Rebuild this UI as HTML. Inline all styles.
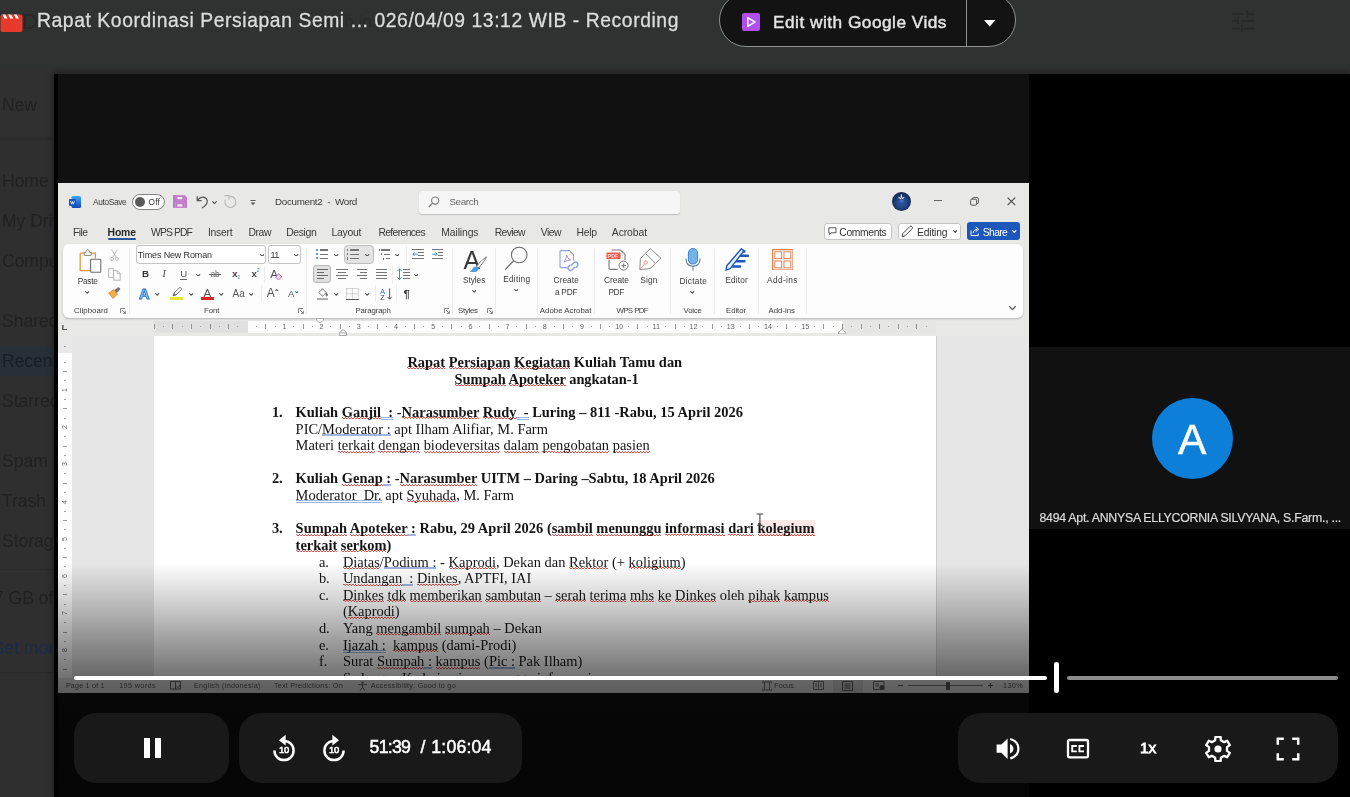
<!DOCTYPE html>
<html lang="id">
<head>
<meta charset="utf-8">
<title>Rapat Koordinasi Persiapan Semi ... Recording</title>
<style>
*{box-sizing:border-box;margin:0;padding:0}
html,body{width:1350px;height:797px;overflow:hidden;background:#303231;font-family:"Liberation Sans",sans-serif}
#root{position:absolute;left:0;top:0;width:1350px;height:797px;overflow:hidden;background:#303231;will-change:transform}
#root div,#root svg{position:absolute}
.t{white-space:pre}
.side{color:#212121}
.r{background-image:repeating-linear-gradient(90deg,rgba(222,60,50,.9) 0 1.5px,transparent 1.5px 3px),repeating-linear-gradient(90deg,transparent 0 1.5px,rgba(222,60,50,.9) 1.5px 3px);background-size:100% 1px,100% 1px;background-position:0 calc(100% - 1.6px),0 calc(100% - 0.6px);background-repeat:no-repeat}
.b{background-image:linear-gradient(#6f93d3,#6f93d3),linear-gradient(#6f93d3,#6f93d3);background-size:100% 0.7px,100% 0.7px;background-position:0 calc(100% - 2px),0 calc(100% - 0.5px);background-repeat:no-repeat}
.u{border-bottom:1px solid #111}
.pill{background:#1e1e1e;border-radius:22px}
.sep{width:1px;background:#d8d8d8}
</style>
</head>
<body>
<div id="root">
<div style="left:0px;top:68px;width:1350px;height:729px;background:#2f2f2f"></div>
<div class="t" style="left:22.0px;top:8.38px;font-size:22px;line-height:28px;color:#262727;">Drive</div>
<svg style="left:257px;top:8px" width="24" height="24" viewBox="0 0 24 24" fill="none" stroke="#272828" stroke-width="2"><circle cx="10" cy="10" r="6.5"/><path d="M15 15 L21 21"/></svg>
<div class="t" style="left:300.0px;top:10.61px;font-size:17px;line-height:21px;color:#292a29;">Search in Drive</div>
<div style="left:0px;top:68px;width:54px;height:72px;background:linear-gradient(to bottom,#303030 0,#303030 94%,#2a2a2a 100%)"></div>
<div style="left:0px;top:346px;width:54px;height:30px;background:#292f36"></div>
<div style="left:0px;top:569px;width:54px;height:1px;background:#2a2a2a"></div>
<div style="left:0px;top:672px;width:54px;height:1px;background:#2a2a2a"></div>
<div class="t" style="left:2.0px;top:93.94px;font-size:17.5px;line-height:22px;color:#212121;">New</div>
<div class="t" style="left:2.0px;top:169.94px;font-size:17.5px;line-height:22px;color:#212121;">Home</div>
<div class="t" style="left:2.0px;top:209.94px;font-size:17.5px;line-height:22px;color:#212121;">My Drive</div>
<div class="t" style="left:2.0px;top:249.94px;font-size:17.5px;line-height:22px;color:#212121;">Computers</div>
<div class="t" style="left:2.0px;top:309.94px;font-size:17.5px;line-height:22px;color:#212121;">Shared with me</div>
<div class="t" style="left:2.0px;top:349.94px;font-size:17.5px;line-height:22px;color:#171d27;">Recent</div>
<div class="t" style="left:2.0px;top:389.94px;font-size:17.5px;line-height:22px;color:#212121;">Starred</div>
<div class="t" style="left:2.0px;top:449.94px;font-size:17.5px;line-height:22px;color:#212121;">Spam</div>
<div class="t" style="left:2.0px;top:489.94px;font-size:17.5px;line-height:22px;color:#212121;">Trash</div>
<div class="t" style="left:2.0px;top:529.94px;font-size:17.5px;line-height:22px;color:#212121;">Storage</div>
<div class="t" style="left:-6.0px;top:586.94px;font-size:17.5px;line-height:22px;color:#212121;">7 GB of 15 GB used</div>
<div class="t" style="left:-9.0px;top:636.94px;font-size:17.5px;line-height:22px;color:#1c2a47;">Get more storage</div>
<svg style="left:0;top:12.5px" width="24" height="20" viewBox="0 0 24 21"><path d="M0 3.5 Q0 1.5 2 1.5 H21 Q23 1.5 23 3.5 V18 Q23 20 21 20 H2 Q0 20 0 18 Z" fill="#e53a2c"/><path d="M5 1.5 l2.2 4.2 h-3 l-2.2 -4.2z M11 1.5 l2.2 4.2 h-3 l-2.2 -4.2z M17 1.5 l2.2 4.2 h-3 l-2.2 -4.2z" fill="#fff"/></svg>
<div class="t" style="left:37.0px;top:8.61px;font-size:19.3px;line-height:24px;color:#dcdcdc;letter-spacing:0.592px;-webkit-text-stroke:0.3px #dcdcdc;">Rapat Koordinasi Persiapan Semi ... 026/04/09 13:12 WIB - Recording</div>
<div style="left:719px;top:-7px;width:297px;height:54px;border:1px solid #8e918f;border-radius:27px;background:#131313"></div>
<div style="left:966px;top:0px;width:1px;height:46px;background:#8e918f"></div>
<svg style="left:742px;top:13px" width="18" height="18" viewBox="0 0 18 18"><rect x="0" y="0" width="18" height="18" rx="2.2" fill="#b24df0"/><path d="M5.8 4.6 L13 9 L5.8 13.4 Z" fill="none" stroke="#fff" stroke-width="1.5" stroke-linejoin="round"/></svg>
<div class="t" style="left:773.0px;top:10.71px;font-size:17.3px;line-height:22px;color:#e3e3e3;letter-spacing:0.478px;-webkit-text-stroke:0.45px #e3e3e3;">Edit with Google Vids</div>
<svg style="left:984px;top:19.5px" width="12" height="7" viewBox="0 0 12 7"><path d="M0 0 H11.5 L5.75 6.5 Z" fill="#fff"/></svg>
<svg style="left:1231px;top:8px" width="24" height="24" viewBox="0 0 24 24" fill="none" stroke="#272828" stroke-width="2"><path d="M1 6h11M16 6h8M1 13h6M11 13h13M1 20.5h8M13 20.5h11M16 2.5v7M7 9.5v7M11 17v7"/></svg>
<div style="left:54px;top:74px;width:1296px;height:723px;background:#000;box-shadow:0 0 7px rgba(0,0,0,.45)"></div>
<div style="left:58px;top:74px;width:971px;height:723px;background:#111"></div>
<div style="left:1029px;top:347px;width:321px;height:182px;background:#111"></div>
<div style="left:1152px;top:398px;width:81px;height:81px;border-radius:50%;background:#0d7fd9"></div>
<div class="t" style="left:1178.0px;top:413.17px;font-size:42.5px;line-height:53px;color:#fff;letter-spacing:-0.059px;-webkit-text-stroke:0.5px #fff;">A</div>
<div class="t" style="left:1039.5px;top:510.74px;font-size:12.3px;line-height:15px;color:#dcdcdc;letter-spacing:-0.244px;-webkit-text-stroke:0.2px #dcdcdc;">8494 Apt. ANNYSA ELLYCORNIA SILVYANA, S.Farm., ...</div>
<div id="vid" style="left:0;top:0;width:1350px;height:797px;filter:blur(0.45px)">
<div style="left:58px;top:183px;width:971px;height:510px;background:#e8e8e7"></div>
<svg style="left:69px;top:196px" width="12" height="12" viewBox="0 0 12 12" ><defs><linearGradient id="wg" x1="0" y1="0" x2="0" y2="1"><stop offset="0" stop-color="#3fa9f5"/><stop offset="1" stop-color="#1247b8"/></linearGradient></defs><rect x="2.5" y="0" width="9.5" height="12" rx="1.5" fill="url(#wg)"/><rect x="0" y="3" width="7" height="7" rx="1" fill="#1c4fc0"/><path d="M1.6 4.8 L2.6 8.2 L3.5 5.6 L4.4 8.2 L5.4 4.8" fill="none" stroke="#fff" stroke-width="0.8"/></svg>
<div class="t" style="left:93.0px;top:196.92px;font-size:8.3px;line-height:10px;color:#3b3b3b;letter-spacing:-0.336px;">AutoSave</div>
<div style="left:131.5px;top:194px;width:33.5px;height:16px;background:#fff;border:1px solid #858585;border-radius:8px"></div>
<div style="left:135px;top:197px;width:10px;height:10px;background:#5a5a5a;border-radius:50%"></div>
<div class="t" style="left:148.6px;top:197.02px;font-size:8.3px;line-height:10px;color:#3b3b3b;letter-spacing:0.093px;">Off</div>
<svg style="left:173px;top:195px" width="14" height="13" viewBox="0 0 14 13" ><path d="M0.8 0 H11.5 L14 2.5 V12.2 Q14 13 13.2 13 H0.8 Q0 13 0 12.2 V0.8 Q0 0 0.8 0Z" fill="#bd78c6"/><rect x="4.4" y="2" width="5" height="2.2" rx="0.6" fill="#f6e8f7"/><rect x="4.2" y="9.2" width="5.4" height="2.4" rx="0.6" fill="#f6e8f7"/><rect x="3" y="0.6" width="8" height="4.6" fill="none" stroke="#cf9ad6" stroke-width="0.6"/><rect x="2.6" y="7.8" width="8.8" height="5" fill="none" stroke="#cf9ad6" stroke-width="0.6"/></svg>
<svg style="left:195.5px;top:195px" width="13" height="14" viewBox="0 0 13 14" ><path d="M1.2 1.2 V5.6 H5.6 M1.6 5.2 Q4.6 1.4 8.2 2.4 Q11.6 3.6 11.2 7.2 Q10.6 10.4 6 13" fill="none" stroke="#555" stroke-width="1.2"/></svg>
<svg style="left:211.5px;top:200.5px" width="5" height="3" viewBox="0 0 5 3" ><path d="M0.3 0.3 L2.5 2.6 L4.7 0.3" fill="none" stroke="#555" stroke-width="1.15"/></svg>
<svg style="left:224px;top:195.3px" width="13" height="13" viewBox="0 0 13 13" ><path d="M5.4 1.5 A5.5 5.5 0 1 1 1.3 4.8" fill="none" stroke="#b9b9b9" stroke-width="1.1"/><path d="M0.4 0.6 H5 V4.4" fill="none" stroke="#b9b9b9" stroke-width="1.1"/></svg>
<svg style="left:250px;top:199.5px" width="6" height="6" viewBox="0 0 6 6" ><path d="M0.5 0.5 H5.5" stroke="#555" stroke-width="1"/><path d="M0.6 2.6 L3 5.2 L5.4 2.6 Z" fill="#555"/></svg>
<div class="t" style="left:275.0px;top:196.10px;font-size:9.8px;line-height:12px;color:#3b3b3b;letter-spacing:-0.305px;">Document2  -  Word</div>
<div style="left:418.5px;top:190.5px;width:261.5px;height:23.0px;background:#f6f6f6;border-radius:3px;box-shadow:0 0.5px 1px rgba(0,0,0,.18)"></div>
<svg style="left:428px;top:196px" width="12" height="12" viewBox="0 0 12 12" ><circle cx="7.2" cy="4.6" r="3.6" fill="none" stroke="#777" stroke-width="1.1"/><path d="M4.6 7.2 L0.8 11" stroke="#777" stroke-width="1.2"/></svg>
<div class="t" style="left:449.4px;top:196.10px;font-size:9.8px;line-height:12px;color:#666;letter-spacing:-0.341px;">Search</div>
<div style="left:892px;top:192px;width:19px;height:19px;border-radius:50%;background:radial-gradient(circle at 50% 55%,#2f5aa6 0,#24468a 35%,#15284f 70%,#0f1c3a 100%)"></div>
<svg style="left:896px;top:194px" width="11" height="10" viewBox="0 0 11 10" ><path d="M5.4 0.8 V3.2 M3 3.6 L4.6 4.6 M7.8 3.6 L6.2 4.6" stroke="#dfe8f5" stroke-width="1.2" stroke-linecap="round" fill="none"/><rect x="3.6" y="5.6" width="3.8" height="2.6" fill="#3f6fc0"/></svg>
<div style="left:934px;top:200.4px;width:8px;height:1.0999999999999943px;background:#666"></div>
<svg style="left:969.5px;top:196.8px" width="9" height="9" viewBox="0 0 9 9" ><rect x="0.6" y="2.2" width="6" height="6" rx="1.2" fill="none" stroke="#555" stroke-width="1"/><path d="M2.4 2 V1.6 Q2.4 0.6 3.4 0.6 H7.2 Q8.4 0.6 8.4 1.8 V5.6 Q8.4 6.6 7.4 6.6 H7" fill="none" stroke="#555" stroke-width="1"/></svg>
<svg style="left:1007px;top:196.8px" width="9" height="9" viewBox="0 0 9 9" ><path d="M0.6 0.6 L8.2 8.2 M8.2 0.6 L0.6 8.2" stroke="#444" stroke-width="1.1"/></svg>
<div class="t" style="left:72.9px;top:225.70px;font-size:10.4px;line-height:13px;color:#3b3b3b;letter-spacing:-0.538px;">File</div>
<div class="t" style="left:107.6px;top:225.70px;font-size:10.4px;line-height:13px;color:#2a2a2a;font-weight:bold;letter-spacing:-0.169px;">Home</div>
<div class="t" style="left:151.0px;top:225.70px;font-size:10.4px;line-height:13px;color:#3b3b3b;letter-spacing:-0.906px;">WPS PDF</div>
<div class="t" style="left:208.0px;top:225.70px;font-size:10.4px;line-height:13px;color:#3b3b3b;letter-spacing:-0.283px;">Insert</div>
<div class="t" style="left:248.4px;top:225.70px;font-size:10.4px;line-height:13px;color:#3b3b3b;letter-spacing:-0.413px;">Draw</div>
<div class="t" style="left:286.2px;top:225.70px;font-size:10.4px;line-height:13px;color:#3b3b3b;letter-spacing:-0.360px;">Design</div>
<div class="t" style="left:331.5px;top:225.70px;font-size:10.4px;line-height:13px;color:#3b3b3b;letter-spacing:-0.251px;">Layout</div>
<div class="t" style="left:378.4px;top:225.70px;font-size:10.4px;line-height:13px;color:#3b3b3b;letter-spacing:-0.654px;">References</div>
<div class="t" style="left:441.3px;top:225.70px;font-size:10.4px;line-height:13px;color:#3b3b3b;letter-spacing:-0.128px;">Mailings</div>
<div class="t" style="left:494.7px;top:225.70px;font-size:10.4px;line-height:13px;color:#3b3b3b;letter-spacing:-0.630px;">Review</div>
<div class="t" style="left:540.8px;top:225.70px;font-size:10.4px;line-height:13px;color:#3b3b3b;letter-spacing:-0.536px;">View</div>
<div class="t" style="left:576.6px;top:225.70px;font-size:10.4px;line-height:13px;color:#3b3b3b;letter-spacing:-0.319px;">Help</div>
<div class="t" style="left:611.8px;top:225.70px;font-size:10.4px;line-height:13px;color:#3b3b3b;letter-spacing:-0.087px;">Acrobat</div>
<div style="left:107.6px;top:238px;width:28.400000000000006px;height:2.3000000000000114px;background:#2b579a;border-radius:1px"></div>
<div style="left:824px;top:222.5px;width:68px;height:17.5px;background:#fff;border:1px solid #c6c6c6;border-radius:3px"></div>
<svg style="left:828px;top:227px" width="9" height="9" viewBox="0 0 9 9" ><path d="M0.8 0.8 H8 V5.8 H3 L1.4 7.6 V5.8 H0.8 Z" fill="none" stroke="#444" stroke-width="0.9"/></svg>
<div class="t" style="left:839.3px;top:225.53px;font-size:10.3px;line-height:13px;color:#333;letter-spacing:-0.335px;">Comments</div>
<div style="left:898px;top:222.5px;width:62.5px;height:17.5px;background:#fff;border:1px solid #c6c6c6;border-radius:3px"></div>
<svg style="left:901px;top:225px" width="13" height="13" viewBox="0 0 13 13" ><path d="M1.2 11.8 L1.8 8.6 L9 1.4 Q10 0.6 11 1.6 Q12 2.6 11.2 3.6 L4 10.8 Z" fill="none" stroke="#444" stroke-width="1"/></svg>
<div class="t" style="left:917.0px;top:225.53px;font-size:10.3px;line-height:13px;color:#333;letter-spacing:-0.169px;">Editing</div>
<svg style="left:952.75px;top:230.1px" width="4.5" height="2.8" viewBox="0 0 4.5 2.8" ><path d="M0.3 0.3 L2.25 2.4 L4.2 0.3" fill="none" stroke="#444" stroke-width="1.15"/></svg>
<div style="left:966.5px;top:222px;width:53.5px;height:18px;background:#1c57ba;border-radius:3px"></div>
<svg style="left:970px;top:225.5px" width="10" height="11" viewBox="0 0 10 11" ><path d="M1 4.6 V9.6 H8.2 V7.4 M3 7 Q3.4 3.6 7 3.4 M5.6 1 L8.6 3.4 L5.6 5.8" fill="none" stroke="#fff" stroke-width="1"/></svg>
<div class="t" style="left:982.8px;top:225.53px;font-size:10.3px;line-height:13px;color:#fff;letter-spacing:-0.617px;">Share</div>
<svg style="left:1012.05px;top:230.1px" width="4.5" height="2.8" viewBox="0 0 4.5 2.8" ><path d="M0.3 0.3 L2.25 2.4 L4.2 0.3" fill="none" stroke="#fff" stroke-width="1.15"/></svg>
<div style="left:63px;top:243.5px;width:960px;height:74.5px;background:#fdfdfd;border-radius:6px;box-shadow:0 1px 2px rgba(0,0,0,.22)"></div>
<div style="left:129.0px;top:248px;width:1.0px;height:66px;background:#ebebeb"></div>
<div style="left:306.1px;top:248px;width:1.0px;height:66px;background:#ebebeb"></div>
<div style="left:451.9px;top:248px;width:1.0px;height:66px;background:#ebebeb"></div>
<div style="left:495.0px;top:248px;width:1.0px;height:66px;background:#ebebeb"></div>
<div style="left:536.5px;top:248px;width:1.0px;height:66px;background:#ebebeb"></div>
<div style="left:593.7px;top:248px;width:1.0px;height:66px;background:#ebebeb"></div>
<div style="left:670.0px;top:248px;width:1.0px;height:66px;background:#ebebeb"></div>
<div style="left:713.8px;top:248px;width:1.0px;height:66px;background:#ebebeb"></div>
<div style="left:757.9px;top:248px;width:1.0px;height:66px;background:#ebebeb"></div>
<div style="left:805.8px;top:248px;width:1.0px;height:66px;background:#ebebeb"></div>
<svg style="left:1008.5px;top:306.0px" width="7" height="4" viewBox="0 0 7 4" ><path d="M0.3 0.3 L3.5 3.6 L6.7 0.3" fill="none" stroke="#444" stroke-width="1.15"/></svg>
<svg style="left:78.5px;top:248.5px" width="23" height="24" viewBox="0 0 23 24" ><path d="M1.2 4.2 H5.4 M11.6 4.2 H16.4 V9.6 M11.4 21.6 H1.2 V4.2" fill="none" stroke="#e9973a" stroke-width="1.3"/><path d="M5.2 6.4 V3.4 H6.8 Q7 0.8 8.7 0.8 Q10.4 0.8 10.6 3.4 H12.2 V6.4 Z" fill="#fdfdfd" stroke="#8a8a8a" stroke-width="1"/><rect x="11.6" y="10.2" width="10.2" height="13" rx="0.8" fill="#fdfdfd" stroke="#6e6e6e" stroke-width="1.1"/></svg>
<div class="t" style="left:77.7px;top:276.02px;font-size:8.3px;line-height:10px;color:#3b3b3b;letter-spacing:-0.264px;">Paste</div>
<svg style="left:85.2px;top:291.3px" width="4.4" height="2.6" viewBox="0 0 4.4 2.6" ><path d="M0.3 0.3 L2.2 2.2 L4.1000000000000005 0.3" fill="none" stroke="#5a5a5a" stroke-width="1.15"/></svg>
<svg style="left:110px;top:248.8px" width="9" height="12" viewBox="0 0 9 12" ><path d="M1.6 0.4 L6 8.2 M7.4 0.4 L3 8.2" stroke="#b0b0b0" stroke-width="0.9" fill="none"/><circle cx="2.2" cy="9.8" r="1.5" fill="none" stroke="#b0b0b0" stroke-width="0.9"/><circle cx="6.8" cy="9.8" r="1.5" fill="none" stroke="#b0b0b0" stroke-width="0.9"/></svg>
<svg style="left:107.8px;top:268px" width="13" height="13" viewBox="0 0 13 13" ><path d="M0.6 0.6 H5.4 V9.4 H0.6 Z" fill="none" stroke="#b4b4b4" stroke-width="1"/><path d="M5.6 2.6 H9.4 L12.2 5.4 V12.2 H5.6 Z" fill="#fdfdfd" stroke="#b4b4b4" stroke-width="1"/><path d="M9.2 2.8 V5.6 H12" fill="none" stroke="#b4b4b4" stroke-width="0.9"/></svg>
<svg style="left:108.2px;top:287.2px" width="13" height="12.4" viewBox="0 0 13 12.4" ><path d="M0.6 6 L6.2 2.4 L9.4 7.2 L5 11.6 Z" fill="#f0ae4e" stroke="#d98a2b" stroke-width="0.8"/><path d="M7 3.2 L9.6 1 Q10.8 0.2 11.6 1.2 Q12.4 2.4 11.2 3.2 L8.8 5.4 Z" fill="#777" stroke="#555" stroke-width="0.6"/></svg>
<div class="t" style="left:74.0px;top:306.30px;font-size:7.8px;line-height:10px;color:#3b3b3b;letter-spacing:0.069px;">Clipboard</div>
<svg style="left:120.4px;top:308px" width="6" height="6" viewBox="0 0 6 6" ><path d="M0.5 5 V0.5 H5 M2.2 2.2 L5.2 5.2 M5.4 2.8 V5.4 H2.8" fill="none" stroke="#666" stroke-width="0.8"/></svg>
<div style="left:135.5px;top:245.3px;width:130.5px;height:18.599999999999966px;background:#fff;border:1px solid #c4c4c4;border-radius:3px"></div>
<div class="t" style="left:137.8px;top:249.58px;font-size:9px;line-height:11px;color:#333;letter-spacing:-0.139px;">Times New Roman</div>
<svg style="left:259.8px;top:253.7px" width="4.4" height="2.6" viewBox="0 0 4.4 2.6" ><path d="M0.3 0.3 L2.2 2.2 L4.1000000000000005 0.3" fill="none" stroke="#5a5a5a" stroke-width="1.15"/></svg>
<div style="left:268.2px;top:245.3px;width:32.60000000000002px;height:18.599999999999966px;background:#fff;border:1px solid #c4c4c4;border-radius:3px"></div>
<div class="t" style="left:270.6px;top:249.58px;font-size:9px;line-height:11px;color:#333;letter-spacing:-0.622px;">11</div>
<svg style="left:294.40000000000003px;top:253.7px" width="4.4" height="2.6" viewBox="0 0 4.4 2.6" ><path d="M0.3 0.3 L2.2 2.2 L4.1000000000000005 0.3" fill="none" stroke="#5a5a5a" stroke-width="1.15"/></svg>
<div class="t" style="left:142.0px;top:267.90px;font-size:9.8px;line-height:12px;color:#333;font-weight:bold;letter-spacing:-1.278px;">B</div>
<div class="t" style="left:162.4px;top:267.93px;font-size:10px;line-height:12px;color:#444;font-family:'Liberation Serif',serif;font-style:italic;letter-spacing:1.056px;">I</div>
<div class="t" style="left:180.2px;top:267.87px;font-size:9.6px;line-height:12px;color:#555;letter-spacing:-0.137px;">U</div>
<div style="left:180px;top:278.6px;width:7.400000000000006px;height:1.0px;background:#666"></div>
<svg style="left:196.4px;top:273.7px" width="4.4" height="2.6" viewBox="0 0 4.4 2.6" ><path d="M0.3 0.3 L2.2 2.2 L4.1000000000000005 0.3" fill="none" stroke="#5a5a5a" stroke-width="1.15"/></svg>
<div class="t" style="left:210.6px;top:269.49px;font-size:8.4px;line-height:10px;color:#666;letter-spacing:-0.164px;">ab</div>
<div style="left:209.2px;top:274.2px;width:11.600000000000023px;height:0.9000000000000341px;background:#666"></div>
<div class="t" style="left:232.3px;top:268.27px;font-size:9.6px;line-height:12px;color:#444;font-weight:bold;letter-spacing:-0.644px;">x</div>
<div class="t" style="left:237.6px;top:274.81px;font-size:4.6px;line-height:6px;color:#2f7fd6;letter-spacing:0.238px;">2</div>
<div class="t" style="left:251.6px;top:268.27px;font-size:9.6px;line-height:12px;color:#444;font-weight:bold;letter-spacing:-0.644px;">x</div>
<div class="t" style="left:257.0px;top:268.01px;font-size:4.6px;line-height:6px;color:#2f7fd6;letter-spacing:0.238px;">2</div>
<div style="left:264.3px;top:266.5px;width:1.0px;height:16.5px;background:#ededed"></div>
<div class="t" style="left:270.2px;top:266.58px;font-size:11.6px;line-height:14px;color:#555;letter-spacing:-0.334px;">A</div>
<svg style="left:275px;top:272.8px" width="7.4" height="7.6" viewBox="0 0 7.4 7.6" ><path d="M3.6 0.6 L6.8 3.8 L3.4 7 L0.6 4.2 Z" fill="#f4d8f2" stroke="#b55fc0" stroke-width="0.9"/></svg>
<div class="t" style="left:139px;top:286px;font-size:14.6px;line-height:17px;font-weight:bold;color:#a9d0f5;-webkit-text-stroke:0.9px #2273cf;letter-spacing:0">A</div>
<svg style="left:155.20000000000002px;top:293.09999999999997px" width="4.4" height="2.6" viewBox="0 0 4.4 2.6" ><path d="M0.3 0.3 L2.2 2.2 L4.1000000000000005 0.3" fill="none" stroke="#5a5a5a" stroke-width="1.15"/></svg>
<svg style="left:172px;top:287.4px" width="10.4" height="9.6" viewBox="0 0 10.4 9.6" ><path d="M1 8.8 L2.2 6 L7.4 0.8 Q8.4 0.2 9.2 1 Q9.9 1.9 9.2 2.8 L4 8 Z" fill="none" stroke="#666" stroke-width="0.9"/><path d="M1 8.8 L2.2 6 L4 8 Z" fill="#666"/></svg>
<div style="left:170.3px;top:297.2px;width:12.699999999999989px;height:3.1000000000000227px;background:#e6e436"></div>
<svg style="left:188.60000000000002px;top:293.09999999999997px" width="4.4" height="2.6" viewBox="0 0 4.4 2.6" ><path d="M0.3 0.3 L2.2 2.2 L4.1000000000000005 0.3" fill="none" stroke="#5a5a5a" stroke-width="1.15"/></svg>
<div class="t" style="left:203.6px;top:285.58px;font-size:11.6px;line-height:14px;color:#555;letter-spacing:0.666px;">A</div>
<div style="left:200.9px;top:296.9px;width:13.0px;height:3.2000000000000455px;background:#d8281e"></div>
<svg style="left:219.4px;top:293.09999999999997px" width="4.4" height="2.6" viewBox="0 0 4.4 2.6" ><path d="M0.3 0.3 L2.2 2.2 L4.1000000000000005 0.3" fill="none" stroke="#5a5a5a" stroke-width="1.15"/></svg>
<div class="t" style="left:232.6px;top:288.23px;font-size:10px;line-height:12px;color:#555;letter-spacing:-0.017px;">Aa</div>
<svg style="left:248.8px;top:293.09999999999997px" width="4.4" height="2.6" viewBox="0 0 4.4 2.6" ><path d="M0.3 0.3 L2.2 2.2 L4.1000000000000005 0.3" fill="none" stroke="#5a5a5a" stroke-width="1.15"/></svg>
<div style="left:260.5px;top:285.4px;width:1.0px;height:16.600000000000023px;background:#ededed"></div>
<div class="t" style="left:266.8px;top:286.14px;font-size:12px;line-height:15px;color:#555;letter-spacing:0.184px;">A</div>
<svg style="transform:scaleY(-1);left:275.40000000000003px;top:289.29999999999995px" width="3.4" height="2.2" viewBox="0 0 3.4 2.2" ><path d="M0.3 0.3 L1.7 1.8000000000000003 L3.1 0.3" fill="none" stroke="#5a5a5a" stroke-width="1.15"/></svg>
<div class="t" style="left:288.0px;top:288.47px;font-size:9.6px;line-height:12px;color:#555;letter-spacing:0.194px;">A</div>
<svg style="left:294.8px;top:290.9px" width="3.4" height="2.2" viewBox="0 0 3.4 2.2" ><path d="M0.3 0.3 L1.7 1.8000000000000003 L3.1 0.3" fill="none" stroke="#2f7fd6" stroke-width="1.15"/></svg>
<div class="t" style="left:204.0px;top:306.30px;font-size:7.8px;line-height:10px;color:#3b3b3b;letter-spacing:-0.052px;">Font</div>
<svg style="left:298px;top:308px" width="6" height="6" viewBox="0 0 6 6" ><path d="M0.5 5 V0.5 H5 M2.2 2.2 L5.2 5.2 M5.4 2.8 V5.4 H2.8" fill="none" stroke="#666" stroke-width="0.8"/></svg>
<div style="left:316px;top:248.9px;width:2.1999999999999886px;height:2.1999999999999886px;background:#2f7fd6;border-radius:50%"></div>
<div style="left:316px;top:253.1px;width:2.1999999999999886px;height:2.1999999999999886px;background:#2f7fd6;border-radius:50%"></div>
<div style="left:316px;top:257.29999999999995px;width:2.1999999999999886px;height:2.2000000000000455px;background:#2f7fd6;border-radius:50%"></div>
<div style="left:319.6px;top:249.425px;width:8.199999999999989px;height:1.1499999999999773px;background:#757575"></div><div style="left:319.6px;top:253.625px;width:8.199999999999989px;height:1.1499999999999773px;background:#757575"></div><div style="left:319.6px;top:257.825px;width:8.199999999999989px;height:1.1499999999999773px;background:#757575"></div>
<svg style="left:334.40000000000003px;top:253.7px" width="4.4" height="2.6" viewBox="0 0 4.4 2.6" ><path d="M0.3 0.3 L2.2 2.2 L4.1000000000000005 0.3" fill="none" stroke="#5a5a5a" stroke-width="1.15"/></svg>
<div style="left:343.5px;top:245.3px;width:30.100000000000023px;height:18.30000000000001px;background:#e4e4e4;border:1px solid #bdbdbd;border-radius:4px"></div>
<div style="left:346.8px;top:248.7px;width:1.3999999999999773px;height:2.6000000000000227px;background:#2f7fd6"></div>
<div style="left:346.8px;top:252.89999999999998px;width:1.3999999999999773px;height:2.6000000000000227px;background:#2f7fd6"></div>
<div style="left:346.8px;top:257.09999999999997px;width:1.3999999999999773px;height:2.6000000000000227px;background:#2f7fd6"></div>
<div style="left:350px;top:249.425px;width:8.800000000000011px;height:1.1499999999999773px;background:#757575"></div><div style="left:350px;top:253.625px;width:8.800000000000011px;height:1.1499999999999773px;background:#757575"></div><div style="left:350px;top:257.825px;width:8.800000000000011px;height:1.1499999999999773px;background:#757575"></div>
<svg style="left:365.2px;top:253.7px" width="4.4" height="2.6" viewBox="0 0 4.4 2.6" ><path d="M0.3 0.3 L2.2 2.2 L4.1000000000000005 0.3" fill="none" stroke="#5a5a5a" stroke-width="1.15"/></svg>
<div style="left:378.6px;top:249.2px;width:1.0px;height:2.0px;background:#2f7fd6"></div>
<div style="left:381.4px;top:249.425px;width:8.200000000000045px;height:1.1499999999999773px;background:#757575"></div>
<div style="left:380.8px;top:253.4px;width:1.0px;height:2.0px;background:#2f7fd6"></div>
<div style="left:383.6px;top:253.625px;width:6.0px;height:1.1499999999999773px;background:#757575"></div>
<div style="left:383px;top:257.6px;width:1px;height:2.0px;background:#2f7fd6"></div>
<div style="left:385.8px;top:257.825px;width:3.8000000000000114px;height:1.1499999999999773px;background:#757575"></div>
<svg style="left:394.5px;top:253.7px" width="4.4" height="2.6" viewBox="0 0 4.4 2.6" ><path d="M0.3 0.3 L2.2 2.2 L4.1000000000000005 0.3" fill="none" stroke="#5a5a5a" stroke-width="1.15"/></svg>
<div style="left:405.9px;top:246px;width:1.0px;height:17.600000000000023px;background:#ededed"></div>
<div style="left:412.2px;top:248.82500000000002px;width:11.600000000000023px;height:1.1499999999999773px;background:#757575"></div><div style="left:412.2px;top:258.225px;width:11.600000000000023px;height:1.1499999999999773px;background:#757575"></div>
<div style="left:418.4px;top:252.025px;width:5.400000000000034px;height:1.1499999999999773px;background:#757575"></div><div style="left:418.4px;top:255.125px;width:5.400000000000034px;height:1.1499999999999773px;background:#757575"></div>
<svg style="left:412px;top:252px" width="6" height="4.4" viewBox="0 0 6 4.4" ><path d="M5.6 2.2 H1 M2.6 0.4 L0.8 2.2 L2.6 4" fill="none" stroke="#2f7fd6" stroke-width="0.9"/></svg>
<div style="left:432.3px;top:248.82500000000002px;width:10.899999999999977px;height:1.1499999999999773px;background:#757575"></div><div style="left:432.3px;top:258.225px;width:10.899999999999977px;height:1.1499999999999773px;background:#757575"></div>
<div style="left:438.4px;top:252.025px;width:4.800000000000011px;height:1.1499999999999773px;background:#757575"></div><div style="left:438.4px;top:255.125px;width:4.800000000000011px;height:1.1499999999999773px;background:#757575"></div>
<svg style="left:432px;top:252px" width="6" height="4.4" viewBox="0 0 6 4.4" ><path d="M0.4 2.2 H5 M3.4 0.4 L5.2 2.2 L3.4 4" fill="none" stroke="#2f7fd6" stroke-width="0.9"/></svg>
<div style="left:313.3px;top:265.4px;width:17.69999999999999px;height:17.900000000000034px;background:#e0e0e0;border:1px solid #b9b9b9;border-radius:3px"></div>
<div style="left:316.6px;top:269.02500000000003px;width:11.199999999999989px;height:1.1499999999999773px;background:#666"></div><div style="left:316.6px;top:275.225px;width:11.199999999999989px;height:1.1499999999999773px;background:#666"></div>
<div style="left:316.6px;top:272.125px;width:7.7999999999999545px;height:1.1499999999999773px;background:#666"></div><div style="left:316.6px;top:278.325px;width:7.7999999999999545px;height:1.1499999999999773px;background:#666"></div>
<div style="left:336px;top:269.02500000000003px;width:12px;height:1.1499999999999773px;background:#757575"></div><div style="left:336px;top:275.225px;width:12px;height:1.1499999999999773px;background:#757575"></div>
<div style="left:338px;top:272.125px;width:8px;height:1.1499999999999773px;background:#757575"></div><div style="left:338px;top:278.325px;width:8px;height:1.1499999999999773px;background:#757575"></div>
<div style="left:356.8px;top:269.02500000000003px;width:10.199999999999989px;height:1.1499999999999773px;background:#757575"></div><div style="left:356.8px;top:275.225px;width:10.199999999999989px;height:1.1499999999999773px;background:#757575"></div>
<div style="left:359.6px;top:272.125px;width:7.399999999999977px;height:1.1499999999999773px;background:#757575"></div><div style="left:359.6px;top:278.325px;width:7.399999999999977px;height:1.1499999999999773px;background:#757575"></div>
<div style="left:375.9px;top:269.02500000000003px;width:11.300000000000011px;height:1.1499999999999773px;background:#757575"></div><div style="left:375.9px;top:272.125px;width:11.300000000000011px;height:1.1499999999999773px;background:#757575"></div><div style="left:375.9px;top:275.225px;width:11.300000000000011px;height:1.1499999999999773px;background:#757575"></div><div style="left:375.9px;top:278.325px;width:11.300000000000011px;height:1.1499999999999773px;background:#757575"></div>
<div style="left:392.1px;top:266px;width:1.0px;height:17.5px;background:#ededed"></div>
<svg style="left:396.8px;top:268px" width="5" height="12.4" viewBox="0 0 5 12.4" ><path d="M2.5 1 V11.4 M0.6 3 L2.5 0.8 L4.4 3 M0.6 9.4 L2.5 11.6 L4.4 9.4" fill="none" stroke="#2f7fd6" stroke-width="0.9"/></svg>
<div style="left:402.6px;top:269.02500000000003px;width:7.199999999999989px;height:1.1499999999999773px;background:#757575"></div><div style="left:402.6px;top:272.125px;width:7.199999999999989px;height:1.1499999999999773px;background:#757575"></div><div style="left:402.6px;top:275.225px;width:7.199999999999989px;height:1.1499999999999773px;background:#757575"></div><div style="left:402.6px;top:278.325px;width:7.199999999999989px;height:1.1499999999999773px;background:#757575"></div>
<svg style="left:413.90000000000003px;top:273.7px" width="4.4" height="2.6" viewBox="0 0 4.4 2.6" ><path d="M0.3 0.3 L2.2 2.2 L4.1000000000000005 0.3" fill="none" stroke="#5a5a5a" stroke-width="1.15"/></svg>
<svg style="left:317.6px;top:287.8px" width="11" height="9.4" viewBox="0 0 11 9.4" ><path d="M4.4 0.8 L8.2 4.6 L4.6 8.2 L0.8 4.6 Z" fill="none" stroke="#666" stroke-width="0.9"/><path d="M4.4 0.8 L3.2 -0.4 M8.4 4.8 Q10 6.4 9.2 8 Q8 8.6 8 6.8 Z" fill="#666" stroke="#666" stroke-width="0.6"/></svg>
<div style="left:316.5px;top:297.6px;width:11.399999999999977px;height:2.7999999999999545px;background:#fff;border:0.8px solid #b0b0b0"></div>
<svg style="left:334.40000000000003px;top:293.09999999999997px" width="4.4" height="2.6" viewBox="0 0 4.4 2.6" ><path d="M0.3 0.3 L2.2 2.2 L4.1000000000000005 0.3" fill="none" stroke="#5a5a5a" stroke-width="1.15"/></svg>
<svg style="left:346.2px;top:287.6px" width="12.8" height="12.4" viewBox="0 0 12.8 12.4" ><path d="M0.5 0.5 H12.3 V11 M0.5 0.5 V11 M6.4 0.5 V11 M0.5 5.8 H12.3" fill="none" stroke="#9a9a9a" stroke-width="0.8" stroke-dasharray="1 1"/><path d="M0 11.6 H12.8" stroke="#555" stroke-width="1.2"/></svg>
<svg style="left:365.2px;top:293.09999999999997px" width="4.4" height="2.6" viewBox="0 0 4.4 2.6" ><path d="M0.3 0.3 L2.2 2.2 L4.1000000000000005 0.3" fill="none" stroke="#5a5a5a" stroke-width="1.15"/></svg>
<div style="left:374.9px;top:285.4px;width:1.0px;height:17.0px;background:#ededed"></div>
<div class="t" style="left:380.3px;top:287.01px;font-size:7.2px;line-height:9px;color:#2f7fd6;letter-spacing:0.303px;">A</div>
<div class="t" style="left:380.3px;top:293.31px;font-size:7.2px;line-height:9px;color:#444;letter-spacing:0.709px;">Z</div>
<svg style="left:386.8px;top:288.4px" width="5.2" height="12" viewBox="0 0 5.2 12" ><path d="M2.6 0.4 V11 M0.5 8.8 L2.6 11.2 L4.7 8.8" fill="none" stroke="#444" stroke-width="0.9"/></svg>
<div style="left:395.6px;top:285.4px;width:1.0px;height:17.0px;background:#ededed"></div>
<div class="t" style="left:403.6px;top:287.25px;font-size:11.4px;line-height:14px;color:#444;font-weight:bold;letter-spacing:1.056px;">¶</div>
<div class="t" style="left:355.5px;top:306.30px;font-size:7.8px;line-height:10px;color:#3b3b3b;letter-spacing:-0.125px;">Paragraph</div>
<svg style="left:443.8px;top:308px" width="6" height="6" viewBox="0 0 6 6" ><path d="M0.5 5 V0.5 H5 M2.2 2.2 L5.2 5.2 M5.4 2.8 V5.4 H2.8" fill="none" stroke="#666" stroke-width="0.8"/></svg>
<div class="t" style="left:463.6px;top:244.84px;font-size:25px;line-height:31px;color:#3a3a3a;letter-spacing:-0.088px;font-weight:normal;">A</div>
<svg style="left:469px;top:255.6px" width="18.4" height="16.8" viewBox="0 0 18.4 16.8" ><path d="M17.6 0.8 Q12 4 7.6 10.4 L9.6 12 Q15 6.4 17.6 0.8 Z" fill="#fdfdfd" stroke="#777" stroke-width="0.9"/><path d="M7.4 10.4 Q4.6 10.2 3.6 12.6 Q3 14.8 0.8 15.4 Q5.6 17.4 8.4 15 Q10.2 13.4 9.6 12 Z" fill="#4f9be0"/></svg>
<div class="t" style="left:463.1px;top:275.42px;font-size:8.3px;line-height:10px;color:#3b3b3b;letter-spacing:-0.082px;">Styles</div>
<svg style="left:472.0px;top:290.0px" width="4.4" height="2.6" viewBox="0 0 4.4 2.6" ><path d="M0.3 0.3 L2.2 2.2 L4.1000000000000005 0.3" fill="none" stroke="#5a5a5a" stroke-width="1.15"/></svg>
<div class="t" style="left:458.1px;top:306.30px;font-size:7.8px;line-height:10px;color:#3b3b3b;letter-spacing:-0.289px;">Styles</div>
<svg style="left:487.2px;top:308px" width="6" height="6" viewBox="0 0 6 6" ><path d="M0.5 5 V0.5 H5 M2.2 2.2 L5.2 5.2 M5.4 2.8 V5.4 H2.8" fill="none" stroke="#666" stroke-width="0.8"/></svg>
<svg style="left:504px;top:246px" width="25" height="25" viewBox="0 0 25 25" ><circle cx="15.2" cy="9" r="7.8" fill="none" stroke="#6a6a6a" stroke-width="1.1"/><path d="M9.8 14.6 L1.2 23.6" stroke="#6a6a6a" stroke-width="1.3"/></svg>
<div class="t" style="left:503.2px;top:273.52px;font-size:8.3px;line-height:10px;color:#3b3b3b;letter-spacing:0.246px;">Editing</div>
<svg style="left:514.0999999999999px;top:288.9px" width="4.4" height="2.6" viewBox="0 0 4.4 2.6" ><path d="M0.3 0.3 L2.2 2.2 L4.1000000000000005 0.3" fill="none" stroke="#5a5a5a" stroke-width="1.15"/></svg>
<svg style="left:559px;top:249.6px" width="21" height="22.4" viewBox="0 0 21 22.4" ><path d="M8.2 17.6 H2.2 Q1 17.6 1 16.4 V1.8 Q1 0.6 2.2 0.6 H10.4 L14.6 4.8 V10.6" fill="none" stroke="#8fa2dc" stroke-width="1.1"/><path d="M5 12.2 Q7.4 8.6 7.6 5 M7.6 5 Q8.4 8.6 11.6 10 M4.8 12 Q8 10.2 11.6 10" fill="none" stroke="#9a8fd6" stroke-width="0.9"/><g fill="none" stroke="#8fa2dc" stroke-width="1.5" stroke-linecap="round"><path d="M12.6 15 L14.8 12.8 Q16.6 11.2 18.2 12.8 Q19.8 14.6 18.2 16.2 L17 17.4"/><path d="M15.4 17.6 L13.2 19.8 Q11.4 21.4 9.8 19.8 Q8.2 18 9.8 16.4 L11 15.2"/></g></svg>
<div class="t" style="left:553.6px;top:275.12px;font-size:8.3px;line-height:10px;color:#3b3b3b;letter-spacing:0.049px;">Create</div>
<div class="t" style="left:554.9px;top:287.02px;font-size:8.3px;line-height:10px;color:#3b3b3b;letter-spacing:-0.223px;">a PDF</div>
<div class="t" style="left:539.8px;top:306.30px;font-size:7.8px;line-height:10px;color:#3b3b3b;letter-spacing:0.034px;">Adobe Acrobat</div>
<svg style="left:605.5px;top:248.8px" width="24" height="22.4" viewBox="0 0 24 22.4" ><path d="M3 10.4 V19.4 Q3 20.4 4 20.4 H11.6 M5.6 1 H14.4 L19 5.2 V11" fill="none" stroke="#7a7a7a" stroke-width="1.1"/><rect x="0.4" y="3.6" width="14.2" height="6.4" rx="0.8" fill="#ef5a4c"/><circle cx="17.6" cy="16.6" r="4.5" fill="#fdfdfd" stroke="#7a7a7a" stroke-width="1"/><path d="M15.4 16.6 H19.8 M17.6 14.4 V18.8" stroke="#7a7a7a" stroke-width="1.1"/><text x="1.6" y="8.8" font-family="Liberation Sans,sans-serif" font-size="5.4" font-weight="bold" fill="#ffd9d4">PDF</text></svg>
<div class="t" style="left:604.0px;top:275.12px;font-size:8.3px;line-height:10px;color:#3b3b3b;letter-spacing:0.016px;">Create</div>
<div class="t" style="left:608.4px;top:287.02px;font-size:8.3px;line-height:10px;color:#3b3b3b;letter-spacing:-0.370px;">PDF</div>
<svg style="left:638.6px;top:248.4px" width="23" height="22.4" viewBox="0 0 23 22.4" ><path d="M6.4 5.3 L1.4 10.6 L0.8 21.6 L11 20.6 L16.4 15.4" fill="#fdfdfd" stroke="#8a8a8a" stroke-width="1" stroke-linejoin="round"/><path d="M11.4 0.7 L22 10.3 L16.4 15.4 L6.4 5.3 Z" fill="#fdfdfd" stroke="#8a8a8a" stroke-width="1" stroke-linejoin="round"/><path d="M1.2 21.2 L5.6 15.8" stroke="#e58b8b" stroke-width="0.9"/><circle cx="6.7" cy="14.4" r="1.7" fill="none" stroke="#e58b8b" stroke-width="0.9"/></svg>
<div class="t" style="left:640.3px;top:275.12px;font-size:8.3px;line-height:10px;color:#3b3b3b;letter-spacing:0.148px;">Sign</div>
<div class="t" style="left:616.4px;top:306.30px;font-size:7.8px;line-height:10px;color:#3b3b3b;letter-spacing:-0.547px;">WPS PDF</div>
<svg style="left:685px;top:247.6px" width="16" height="23" viewBox="0 0 16 23" ><rect x="3.4" y="0.5" width="9.2" height="15.6" rx="4.6" fill="#74b4ea" stroke="#3b86cf" stroke-width="1"/><path d="M1 10.6 Q1 18.2 8 18.2 Q15 18.2 15 10.6 M8 18.4 V22.4" fill="none" stroke="#5f7f9f" stroke-width="1.1"/></svg>
<div class="t" style="left:679.4px;top:276.02px;font-size:8.3px;line-height:10px;color:#3b3b3b;letter-spacing:0.282px;">Dictate</div>
<svg style="left:690.1999999999999px;top:291.3px" width="4.4" height="2.6" viewBox="0 0 4.4 2.6" ><path d="M0.3 0.3 L2.2 2.2 L4.1000000000000005 0.3" fill="none" stroke="#5a5a5a" stroke-width="1.15"/></svg>
<div class="t" style="left:683.6px;top:306.30px;font-size:7.8px;line-height:10px;color:#3b3b3b;letter-spacing:-0.236px;">Voice</div>
<svg style="left:725px;top:248px" width="24.4" height="23" viewBox="0 0 24.4 23" ><g stroke="#1b58bd" stroke-width="2.5" stroke-linecap="round"><path d="M16.4 3.4 H19.4 M15 7.8 H22.8 M11.4 13.2 H19.4 M8 18.4 H15"/></g><path d="M16.4 0.8 L19 2.6 L5.2 20.6 L1 22.2 L1.8 17.8 Z" fill="#eaf2fc" stroke="#1b58bd" stroke-width="1.4" stroke-linejoin="round"/></svg>
<div class="t" style="left:725.2px;top:275.12px;font-size:8.3px;line-height:10px;color:#3b3b3b;letter-spacing:0.202px;">Editor</div>
<div class="t" style="left:726.0px;top:306.30px;font-size:7.8px;line-height:10px;color:#3b3b3b;letter-spacing:-0.062px;">Editor</div>
<svg style="left:771.6px;top:248.8px" width="21.6" height="21.6" viewBox="0 0 21.6 21.6" ><rect x="0.6" y="0.6" width="20.4" height="20.4" fill="#fdf1ea" stroke="#e07c4e" stroke-width="1.1"/><g fill="#fdfdfd" stroke="#e07c4e" stroke-width="0.9"><rect x="2.8" y="2.8" width="6.8" height="6.8"/><rect x="12" y="2.8" width="6.8" height="6.8"/><rect x="2.8" y="12" width="6.8" height="6.8"/><rect x="12" y="12" width="6.8" height="6.8"/></g></svg>
<div class="t" style="left:767.0px;top:275.12px;font-size:8.3px;line-height:10px;color:#3b3b3b;letter-spacing:0.380px;">Add-ins</div>
<div class="t" style="left:768.6px;top:306.30px;font-size:7.8px;line-height:10px;color:#3b3b3b;letter-spacing:-0.005px;">Add-ins</div>
<div style="left:154px;top:320.5px;width:93.6px;height:12.100000000000023px;background:#e0e0e0"></div>
<div style="left:842px;top:320.5px;width:94px;height:12.100000000000023px;background:#e6e6e5"></div>
<div style="left:247.6px;top:320.5px;width:594.4px;height:12.100000000000023px;background:#fcfcfc"></div>
<div style="left:153.7px;top:324.40000000000003px;width:1.0px;height:4.399999999999977px;background:#969696"></div>
<div style="left:162.9px;top:326.0px;width:1.1999999999999886px;height:1.2000000000000455px;background:#a0a0a0"></div>
<div style="left:172.29999999999998px;top:324.0px;width:1.0px;height:5.2000000000000455px;background:#8c8c8c"></div>
<div style="left:181.49999999999997px;top:326.0px;width:1.1999999999999886px;height:1.2000000000000455px;background:#a0a0a0"></div>
<div style="left:190.89999999999998px;top:324.40000000000003px;width:1.0px;height:4.399999999999977px;background:#969696"></div>
<div style="left:200.1px;top:326.0px;width:1.1999999999999886px;height:1.2000000000000455px;background:#a0a0a0"></div>
<div style="left:209.5px;top:324.0px;width:1.0px;height:5.2000000000000455px;background:#8c8c8c"></div>
<div style="left:218.7px;top:326.0px;width:1.1999999999999886px;height:1.2000000000000455px;background:#a0a0a0"></div>
<div style="left:228.1px;top:324.40000000000003px;width:1.0px;height:4.399999999999977px;background:#969696"></div>
<div style="left:237.29999999999998px;top:326.0px;width:1.1999999999999886px;height:1.2000000000000455px;background:#a0a0a0"></div>
<div style="left:255.9px;top:326.0px;width:1.200000000000017px;height:1.2000000000000455px;background:#a0a0a0"></div>
<div style="left:265.3px;top:324.40000000000003px;width:1.0px;height:4.399999999999977px;background:#969696"></div>
<div style="left:274.49999999999994px;top:326.0px;width:1.2000000000000455px;height:1.2000000000000455px;background:#a0a0a0"></div>
<div class="t" style="left:282.4px;top:322.21px;font-size:7.2px;line-height:9px;color:#666;letter-spacing:0.000px;">1</div>
<div style="left:293.09999999999997px;top:326.0px;width:1.2000000000000455px;height:1.2000000000000455px;background:#a0a0a0"></div>
<div style="left:302.5px;top:324.40000000000003px;width:1.0px;height:4.399999999999977px;background:#969696"></div>
<div style="left:311.7px;top:326.0px;width:1.2000000000000455px;height:1.2000000000000455px;background:#a0a0a0"></div>
<div class="t" style="left:319.6px;top:322.21px;font-size:7.2px;line-height:9px;color:#666;letter-spacing:0.000px;">2</div>
<div style="left:330.29999999999995px;top:326.0px;width:1.2000000000000455px;height:1.2000000000000455px;background:#a0a0a0"></div>
<div style="left:339.7px;top:324.40000000000003px;width:1.0px;height:4.399999999999977px;background:#969696"></div>
<div style="left:348.9px;top:326.0px;width:1.2000000000000455px;height:1.2000000000000455px;background:#a0a0a0"></div>
<div class="t" style="left:356.8px;top:322.21px;font-size:7.2px;line-height:9px;color:#666;letter-spacing:0.000px;">3</div>
<div style="left:367.5px;top:326.0px;width:1.2000000000000455px;height:1.2000000000000455px;background:#a0a0a0"></div>
<div style="left:376.9px;top:324.40000000000003px;width:1.0px;height:4.399999999999977px;background:#969696"></div>
<div style="left:386.09999999999997px;top:326.0px;width:1.2000000000000455px;height:1.2000000000000455px;background:#a0a0a0"></div>
<div class="t" style="left:394.0px;top:322.21px;font-size:7.2px;line-height:9px;color:#666;letter-spacing:0.000px;">4</div>
<div style="left:404.7px;top:326.0px;width:1.2000000000000455px;height:1.2000000000000455px;background:#a0a0a0"></div>
<div style="left:414.1px;top:324.40000000000003px;width:1.0px;height:4.399999999999977px;background:#969696"></div>
<div style="left:423.29999999999995px;top:326.0px;width:1.2000000000000455px;height:1.2000000000000455px;background:#a0a0a0"></div>
<div class="t" style="left:431.2px;top:322.21px;font-size:7.2px;line-height:9px;color:#666;letter-spacing:0.000px;">5</div>
<div style="left:441.9px;top:326.0px;width:1.2000000000000455px;height:1.2000000000000455px;background:#a0a0a0"></div>
<div style="left:451.3px;top:324.40000000000003px;width:1.0px;height:4.399999999999977px;background:#969696"></div>
<div style="left:460.5px;top:326.0px;width:1.2000000000000455px;height:1.2000000000000455px;background:#a0a0a0"></div>
<div class="t" style="left:468.4px;top:322.21px;font-size:7.2px;line-height:9px;color:#666;letter-spacing:0.000px;">6</div>
<div style="left:479.1px;top:326.0px;width:1.2000000000000455px;height:1.2000000000000455px;background:#a0a0a0"></div>
<div style="left:488.5px;top:324.40000000000003px;width:1.0px;height:4.399999999999977px;background:#969696"></div>
<div style="left:497.7px;top:326.0px;width:1.2000000000000455px;height:1.2000000000000455px;background:#a0a0a0"></div>
<div class="t" style="left:505.6px;top:322.21px;font-size:7.2px;line-height:9px;color:#666;letter-spacing:0.000px;">7</div>
<div style="left:516.3000000000001px;top:326.0px;width:1.2000000000000455px;height:1.2000000000000455px;background:#a0a0a0"></div>
<div style="left:525.7px;top:324.40000000000003px;width:1.0px;height:4.399999999999977px;background:#969696"></div>
<div style="left:534.9px;top:326.0px;width:1.2000000000000455px;height:1.2000000000000455px;background:#a0a0a0"></div>
<div class="t" style="left:542.8px;top:322.21px;font-size:7.2px;line-height:9px;color:#666;letter-spacing:0.000px;">8</div>
<div style="left:553.5px;top:326.0px;width:1.2000000000000455px;height:1.2000000000000455px;background:#a0a0a0"></div>
<div style="left:562.9000000000001px;top:324.40000000000003px;width:1.0px;height:4.399999999999977px;background:#969696"></div>
<div style="left:572.1px;top:326.0px;width:1.2000000000000455px;height:1.2000000000000455px;background:#a0a0a0"></div>
<div class="t" style="left:580.0px;top:322.21px;font-size:7.2px;line-height:9px;color:#666;letter-spacing:0.000px;">9</div>
<div style="left:590.6999999999999px;top:326.0px;width:1.2000000000000455px;height:1.2000000000000455px;background:#a0a0a0"></div>
<div style="left:600.1px;top:324.40000000000003px;width:1.0px;height:4.399999999999977px;background:#969696"></div>
<div style="left:609.3000000000001px;top:326.0px;width:1.2000000000000455px;height:1.2000000000000455px;background:#a0a0a0"></div>
<div class="t" style="left:615.2px;top:322.21px;font-size:7.2px;line-height:9px;color:#666;letter-spacing:0.000px;">10</div>
<div style="left:627.9px;top:326.0px;width:1.2000000000000455px;height:1.2000000000000455px;background:#a0a0a0"></div>
<div style="left:637.3px;top:324.40000000000003px;width:1.0px;height:4.399999999999977px;background:#969696"></div>
<div style="left:646.5px;top:326.0px;width:1.2000000000000455px;height:1.2000000000000455px;background:#a0a0a0"></div>
<div class="t" style="left:652.4px;top:322.21px;font-size:7.2px;line-height:9px;color:#666;letter-spacing:0.266px;">11</div>
<div style="left:665.1px;top:326.0px;width:1.2000000000000455px;height:1.2000000000000455px;background:#a0a0a0"></div>
<div style="left:674.5px;top:324.40000000000003px;width:1.0px;height:4.399999999999977px;background:#969696"></div>
<div style="left:683.6999999999999px;top:326.0px;width:1.2000000000000455px;height:1.2000000000000455px;background:#a0a0a0"></div>
<div class="t" style="left:689.6px;top:322.21px;font-size:7.2px;line-height:9px;color:#666;letter-spacing:0.000px;">12</div>
<div style="left:702.3000000000001px;top:326.0px;width:1.2000000000000455px;height:1.2000000000000455px;background:#a0a0a0"></div>
<div style="left:711.7px;top:324.40000000000003px;width:1.0px;height:4.399999999999977px;background:#969696"></div>
<div style="left:720.9px;top:326.0px;width:1.2000000000000455px;height:1.2000000000000455px;background:#a0a0a0"></div>
<div class="t" style="left:726.8px;top:322.21px;font-size:7.2px;line-height:9px;color:#666;letter-spacing:0.000px;">13</div>
<div style="left:739.5px;top:326.0px;width:1.2000000000000455px;height:1.2000000000000455px;background:#a0a0a0"></div>
<div style="left:748.9000000000001px;top:324.40000000000003px;width:1.0px;height:4.399999999999977px;background:#969696"></div>
<div style="left:758.1px;top:326.0px;width:1.2000000000000455px;height:1.2000000000000455px;background:#a0a0a0"></div>
<div class="t" style="left:764.0px;top:322.21px;font-size:7.2px;line-height:9px;color:#666;letter-spacing:0.000px;">14</div>
<div style="left:776.6999999999999px;top:326.0px;width:1.2000000000000455px;height:1.2000000000000455px;background:#a0a0a0"></div>
<div style="left:786.1000000000001px;top:324.40000000000003px;width:1.0px;height:4.399999999999977px;background:#969696"></div>
<div style="left:795.3000000000001px;top:326.0px;width:1.2000000000000455px;height:1.2000000000000455px;background:#a0a0a0"></div>
<div class="t" style="left:801.2px;top:322.21px;font-size:7.2px;line-height:9px;color:#666;letter-spacing:0.000px;">15</div>
<div style="left:813.9px;top:326.0px;width:1.2000000000000455px;height:1.2000000000000455px;background:#a0a0a0"></div>
<div style="left:823.3px;top:324.40000000000003px;width:1.0px;height:4.399999999999977px;background:#969696"></div>
<div style="left:832.5000000000001px;top:326.0px;width:1.2000000000000455px;height:1.2000000000000455px;background:#a0a0a0"></div>
<div style="left:841.9000000000001px;top:324.0px;width:1.0px;height:5.2000000000000455px;background:#8c8c8c"></div>
<div style="left:851.1px;top:326.0px;width:1.2000000000000455px;height:1.2000000000000455px;background:#a0a0a0"></div>
<div style="left:860.5px;top:324.40000000000003px;width:1.0px;height:4.399999999999977px;background:#969696"></div>
<div style="left:869.6999999999999px;top:326.0px;width:1.2000000000000455px;height:1.2000000000000455px;background:#a0a0a0"></div>
<div style="left:879.1000000000001px;top:324.0px;width:1.0px;height:5.2000000000000455px;background:#8c8c8c"></div>
<div style="left:888.3000000000001px;top:326.0px;width:1.2000000000000455px;height:1.2000000000000455px;background:#a0a0a0"></div>
<div style="left:897.7px;top:324.40000000000003px;width:1.0px;height:4.399999999999977px;background:#969696"></div>
<div style="left:906.9px;top:326.0px;width:1.2000000000000455px;height:1.2000000000000455px;background:#a0a0a0"></div>
<div style="left:916.3px;top:324.0px;width:1.0px;height:5.2000000000000455px;background:#8c8c8c"></div>
<div style="left:925.5000000000001px;top:326.0px;width:1.2000000000000455px;height:1.2000000000000455px;background:#a0a0a0"></div>
<svg style="left:62px;top:324.5px" width="5" height="5.5" viewBox="0 0 5 5.5" ><path d="M0.8 0 V4.6 H5" fill="none" stroke="#555" stroke-width="1.4"/></svg>
<svg style="left:315.6px;top:317.6px" width="8" height="5.4" viewBox="0 0 8 5.4" ><path d="M0.5 0.5 H7.5 V2.2 L4 5 L0.5 2.2 Z" fill="#fafafa" stroke="#999" stroke-width="0.8"/></svg>
<svg style="left:338.8px;top:328.2px" width="8" height="8" viewBox="0 0 8 8" ><path d="M0.5 4.6 L4 1.4 L7.5 4.6 V7.5 H0.5 Z M0.5 4.8 H7.5" fill="#fafafa" stroke="#999" stroke-width="0.8"/></svg>
<svg style="left:838px;top:328.6px" width="8" height="5.4" viewBox="0 0 8 5.4" ><path d="M0.5 4.9 H7.5 V3.2 L4 0.4 L0.5 3.2 Z" fill="#fafafa" stroke="#999" stroke-width="0.8"/></svg>
<div style="left:58px;top:336px;width:971px;height:342px;background:#e6e6e6"></div>
<div style="left:154px;top:336px;width:782px;height:342px;background:#fff"></div>
<div style="left:936px;top:336px;width:1px;height:342px;background:#cfcfcf"></div>
<div style="left:58px;top:336px;width:13.5px;height:342px;background:#e9e9e9"></div>
<div style="left:58px;top:353px;width:13.5px;height:325px;background:#fdfdfd"></div>
<div style="left:64.4px;top:361.5px;width:1.1999999999999886px;height:1.0px;background:#a4a4a4"></div>
<div style="left:63px;top:371.0px;width:4px;height:1.0px;background:#999"></div>
<div style="left:64.4px;top:380.0px;width:1.1999999999999886px;height:1.0px;background:#a4a4a4"></div>
<div class="t" style="left:60px;top:384.0px;width:10px;height:12px;font-size:7px;line-height:12px;color:#666;text-align:center;transform:rotate(-90deg)">1</div>
<div style="left:64.4px;top:399.0px;width:1.1999999999999886px;height:1.0px;background:#a4a4a4"></div>
<div style="left:63px;top:408.0px;width:4px;height:1.0px;background:#999"></div>
<div style="left:64.4px;top:417.5px;width:1.1999999999999886px;height:1.0px;background:#a4a4a4"></div>
<div class="t" style="left:60px;top:421.2px;width:10px;height:12px;font-size:7px;line-height:12px;color:#666;text-align:center;transform:rotate(-90deg)">2</div>
<div style="left:64.4px;top:436.0px;width:1.1999999999999886px;height:1.0px;background:#a4a4a4"></div>
<div style="left:63px;top:445.5px;width:4px;height:1.0px;background:#999"></div>
<div style="left:64.4px;top:454.5px;width:1.1999999999999886px;height:1.0px;background:#a4a4a4"></div>
<div class="t" style="left:60px;top:458.4px;width:10px;height:12px;font-size:7px;line-height:12px;color:#666;text-align:center;transform:rotate(-90deg)">3</div>
<div style="left:64.4px;top:473.0px;width:1.1999999999999886px;height:1.0px;background:#a4a4a4"></div>
<div style="left:63px;top:482.5px;width:4px;height:1.0px;background:#999"></div>
<div style="left:64.4px;top:492.0px;width:1.1999999999999886px;height:1.0px;background:#a4a4a4"></div>
<div class="t" style="left:60px;top:495.6px;width:10px;height:12px;font-size:7px;line-height:12px;color:#666;text-align:center;transform:rotate(-90deg)">4</div>
<div style="left:64.4px;top:510.5px;width:1.1999999999999886px;height:1.0px;background:#a4a4a4"></div>
<div style="left:63px;top:519.5px;width:4px;height:1.0px;background:#999"></div>
<div style="left:64.4px;top:529.0px;width:1.1999999999999886px;height:1.0px;background:#a4a4a4"></div>
<div class="t" style="left:60px;top:532.8px;width:10px;height:12px;font-size:7px;line-height:12px;color:#666;text-align:center;transform:rotate(-90deg)">5</div>
<div style="left:64.4px;top:547.5px;width:1.1999999999999886px;height:1.0px;background:#a4a4a4"></div>
<div style="left:63px;top:557.0px;width:4px;height:1.0px;background:#999"></div>
<div style="left:64.4px;top:566.0px;width:1.1999999999999886px;height:1.0px;background:#a4a4a4"></div>
<div class="t" style="left:60px;top:570.0px;width:10px;height:12px;font-size:7px;line-height:12px;color:#666;text-align:center;transform:rotate(-90deg)">6</div>
<div style="left:64.4px;top:585.0px;width:1.1999999999999886px;height:1.0px;background:#a4a4a4"></div>
<div style="left:63px;top:594.0px;width:4px;height:1.0px;background:#999"></div>
<div style="left:64.4px;top:603.5px;width:1.1999999999999886px;height:1.0px;background:#a4a4a4"></div>
<div class="t" style="left:60px;top:607.2px;width:10px;height:12px;font-size:7px;line-height:12px;color:#666;text-align:center;transform:rotate(-90deg)">7</div>
<div style="left:64.4px;top:622.0px;width:1.1999999999999886px;height:1.0px;background:#a4a4a4"></div>
<div style="left:63px;top:631.5px;width:4px;height:1.0px;background:#999"></div>
<div style="left:64.4px;top:640.5px;width:1.1999999999999886px;height:1.0px;background:#a4a4a4"></div>
<div class="t" style="left:60px;top:644.4px;width:10px;height:12px;font-size:7px;line-height:12px;color:#666;text-align:center;transform:rotate(-90deg)">8</div>
<div style="left:64.4px;top:659.0px;width:1.1999999999999886px;height:1.0px;background:#a4a4a4"></div>
<div style="left:63px;top:668.5px;width:4px;height:1.0px;background:#999"></div>
<div style="left:64px;top:346px;width:2px;height:1px;background:#999"></div>
<div class="t" style="left:407.4px;top:353.02px;font-size:14.45px;line-height:18px;color:#141414;font-family:'Liberation Serif',serif;font-weight:bold;letter-spacing:-0.002px;"><span class="r">Rapat</span> <span class="r">Persiapan</span> <span class="r">Kegiatan</span> Kuliah Tamu dan</div>
<div class="t" style="left:454.6px;top:369.65px;font-size:14.45px;line-height:18px;color:#141414;font-family:'Liberation Serif',serif;font-weight:bold;letter-spacing:-0.042px;"><span class="r">Sumpah</span> <span class="r">Apoteker</span> angkatan-1</div>
<div class="t" style="left:271.9px;top:402.91px;font-size:14.45px;line-height:18px;color:#141414;font-family:'Liberation Serif',serif;font-weight:bold;">1.</div>
<div class="t" style="left:295.6px;top:402.91px;font-size:14.45px;line-height:18px;color:#141414;font-family:'Liberation Serif',serif;font-weight:bold;letter-spacing:0.004px;">Kuliah <span class="r">Ganjil</span><span class="b">  :</span> -<span class="r">Narasumber</span> <span class="r">Rudy</span><span class="b">  -</span> Luring – 811 -Rabu, 15 April 2026</div>
<div class="t" style="left:295.6px;top:419.54px;font-size:14.45px;line-height:18px;color:#141414;font-family:'Liberation Serif',serif;letter-spacing:0.006px;">PIC/<span class="b">Moderator :</span> apt Ilham Alifiar, M. Farm</div>
<div class="t" style="left:295.6px;top:436.17px;font-size:14.45px;line-height:18px;color:#141414;font-family:'Liberation Serif',serif;letter-spacing:0.006px;">Materi <span class="r">terkait</span> <span class="r">dengan</span> <span class="r">biodeversitas</span> <span class="r">dalam</span> <span class="r">pengobatan</span> <span class="r">pasien</span></div>
<div class="t" style="left:271.9px;top:469.43px;font-size:14.45px;line-height:18px;color:#141414;font-family:'Liberation Serif',serif;font-weight:bold;">2.</div>
<div class="t" style="left:295.6px;top:469.43px;font-size:14.45px;line-height:18px;color:#141414;font-family:'Liberation Serif',serif;font-weight:bold;letter-spacing:0.002px;">Kuliah <span class="r">Genap</span><span class="b"> :</span> -<span class="r">Narasumber</span> UITM – Daring –Sabtu, 18 April 2026</div>
<div class="t" style="left:295.6px;top:486.06px;font-size:14.45px;line-height:18px;color:#141414;font-family:'Liberation Serif',serif;letter-spacing:-0.007px;"><span class="b">Moderator  Dr.</span> apt <span class="r">Syuhada</span>, M. Farm</div>
<div class="t" style="left:271.9px;top:519.32px;font-size:14.45px;line-height:18px;color:#141414;font-family:'Liberation Serif',serif;font-weight:bold;">3.</div>
<div class="t" style="left:295.6px;top:519.32px;font-size:14.45px;line-height:18px;color:#141414;font-family:'Liberation Serif',serif;font-weight:bold;letter-spacing:0.012px;"><span class="r">Sumpah</span> <span class="r">Apoteker</span><span class="b"> :</span> Rabu, 29 April 2026 (<span class="r">sambil</span> <span class="r">menunggu</span> <span class="r">informasi</span> <span class="r">dari</span> <span class="r" style="background-color:#fae8e8">kolegium</span></div>
<div class="t" style="left:295.6px;top:535.95px;font-size:14.45px;line-height:18px;color:#141414;font-family:'Liberation Serif',serif;font-weight:bold;letter-spacing:-0.010px;"><span class="r">terkait</span> <span class="r">serkom</span>)</div>
<div class="t" style="left:318.9px;top:552.58px;font-size:14.45px;line-height:18px;color:#141414;font-family:'Liberation Serif',serif;">a.</div>
<div class="t" style="left:342.9px;top:552.58px;font-size:14.45px;line-height:18px;color:#141414;font-family:'Liberation Serif',serif;letter-spacing:0.009px;"><span class="r">Diatas</span>/<span class="b">Podium :</span> - <span class="r">Kaprodi</span>, Dekan dan <span class="r">Rektor</span> (+ <span class="r">koligium</span>)</div>
<div class="t" style="left:318.9px;top:569.21px;font-size:14.45px;line-height:18px;color:#141414;font-family:'Liberation Serif',serif;">b.</div>
<div class="t" style="left:342.9px;top:569.21px;font-size:14.45px;line-height:18px;color:#141414;font-family:'Liberation Serif',serif;letter-spacing:-0.016px;"><span class="r">Undangan</span><span class="b">  :</span> <span class="r">Dinkes</span>, APTFI, IAI</div>
<div class="t" style="left:318.9px;top:585.84px;font-size:14.45px;line-height:18px;color:#141414;font-family:'Liberation Serif',serif;">c.</div>
<div class="t" style="left:342.9px;top:585.84px;font-size:14.45px;line-height:18px;color:#141414;font-family:'Liberation Serif',serif;letter-spacing:0.010px;"><span class="r">Dinkes</span> <span class="r">tdk</span> <span class="r">memberikan</span> <span class="r">sambutan</span> – <span class="r">serah</span> <span class="r">terima</span> <span class="r">mhs</span> <span class="r">ke</span> <span class="r">Dinkes</span> oleh <span class="r">pihak</span> <span class="r">kampus</span></div>
<div class="t" style="left:342.9px;top:602.47px;font-size:14.45px;line-height:18px;color:#141414;font-family:'Liberation Serif',serif;letter-spacing:-0.026px;">(<span class="r">Kaprodi</span>)</div>
<div class="t" style="left:318.9px;top:619.10px;font-size:14.45px;line-height:18px;color:#141414;font-family:'Liberation Serif',serif;">d.</div>
<div class="t" style="left:342.9px;top:619.10px;font-size:14.45px;line-height:18px;color:#141414;font-family:'Liberation Serif',serif;letter-spacing:-0.002px;">Yang <span class="r">mengambil</span> <span class="r">sumpah</span> – Dekan</div>
<div class="t" style="left:318.9px;top:635.73px;font-size:14.45px;line-height:18px;color:#141414;font-family:'Liberation Serif',serif;">e.</div>
<div class="t" style="left:342.9px;top:635.73px;font-size:14.45px;line-height:18px;color:#141414;font-family:'Liberation Serif',serif;letter-spacing:0.006px;"><span class="b">Ijazah :</span>  <span class="r">kampus</span> (dami-Prodi)</div>
<div class="t" style="left:318.9px;top:652.36px;font-size:14.45px;line-height:18px;color:#141414;font-family:'Liberation Serif',serif;">f.</div>
<div class="t" style="left:342.9px;top:652.36px;font-size:14.45px;line-height:18px;color:#141414;font-family:'Liberation Serif',serif;letter-spacing:-0.001px;">Surat <span class="r">Sumpah</span><span class="b"> :</span> <span class="r">kampus</span> (<span class="b">Pic :</span> Pak Ilham)</div>
<div class="t" style="left:342.9px;top:668.99px;font-size:14.45px;line-height:18px;color:#141414;font-family:'Liberation Serif',serif;letter-spacing:-0.077px;">Sedangan Kaderisasi : menunggu informasi</div>
<svg style="left:755.5px;top:512.5px" width="8" height="14" viewBox="0 0 8 14" fill="none" stroke="#444" stroke-width="1.1"><path d="M0.6 1 H7.2 M3.9 1 V12.4 M1.2 12.4 H6.6"/></svg>
<div style="left:58px;top:678px;width:971px;height:15px;background:#e6e6e6"></div>
<div class="t" style="left:65.9px;top:681.41px;font-size:7.2px;line-height:9px;color:#585858;letter-spacing:0.184px;">Page 1 of 1</div>
<div class="t" style="left:119.2px;top:681.41px;font-size:7.2px;line-height:9px;color:#585858;letter-spacing:0.392px;">195 words</div>
<svg style="left:170px;top:681px" width="11" height="9" viewBox="0 0 11 9" ><path d="M0.5 0.5 H10.5 V8 H0.5 Z M5.5 0.5 V8" fill="none" stroke="#585858" stroke-width="0.9"/><path d="M6.5 5 L8 6.6 L10.6 3.4" fill="none" stroke="#585858" stroke-width="0.9"/></svg>
<div class="t" style="left:194.0px;top:681.41px;font-size:7.2px;line-height:9px;color:#585858;letter-spacing:0.272px;">English (Indonesia)</div>
<div class="t" style="left:274.0px;top:681.41px;font-size:7.2px;line-height:9px;color:#585858;letter-spacing:0.229px;">Text Predictions: On</div>
<svg style="left:357px;top:680.6px" width="11" height="10" viewBox="0 0 11 10" ><circle cx="5.5" cy="1.6" r="1.2" fill="#585858"/><path d="M1 3.6 H10 M5.5 3.6 V6.6 M5.5 6.4 L3 9.6 M5.5 6.4 L8 9.6" fill="none" stroke="#585858" stroke-width="0.9"/></svg>
<div class="t" style="left:370.7px;top:681.41px;font-size:7.2px;line-height:9px;color:#585858;letter-spacing:0.260px;">Accessibility: Good to go</div>
<svg style="left:761.6px;top:680.6px" width="10" height="10" viewBox="0 0 10 10" ><path d="M2.4 1 H7.6 V9 H2.4 Z" fill="none" stroke="#585858" stroke-width="0.9"/><path d="M0.4 2.4 V0.4 H2.2 M9.6 2.4 V0.4 H7.8 M0.4 7.6 V9.6 H2.2 M9.6 7.6 V9.6 H7.8" fill="none" stroke="#585858" stroke-width="0.7"/></svg>
<div class="t" style="left:774.3px;top:681.41px;font-size:7.2px;line-height:9px;color:#585858;letter-spacing:0.024px;">Focus</div>
<svg style="left:812.6px;top:681px" width="11" height="9" viewBox="0 0 11 9" ><path d="M0.5 0.5 H10.5 V8.5 H0.5 Z M5.5 0.5 V8.5 M2 3 H4 M2 5 H4 M7 3 H9 M7 5 H9" fill="none" stroke="#585858" stroke-width="0.8"/></svg>
<div style="left:833px;top:678.5px;width:30px;height:14.5px;background:#d2d2d2"></div>
<svg style="left:842.4px;top:680.6px" width="11" height="10" viewBox="0 0 11 10" ><path d="M0.5 0.5 H10.5 V9.5 H0.5 Z M2.4 3 H8.6 M2.4 5 H8.6 M2.4 7 H8.6" fill="none" stroke="#585858" stroke-width="0.9"/></svg>
<svg style="left:873px;top:681px" width="12" height="9.6" viewBox="0 0 12 9.6" ><path d="M0.5 0.5 H11 V8.5 H0.5 Z M2.4 2.8 H6 M2.4 4.8 H6" fill="none" stroke="#585858" stroke-width="0.9"/><circle cx="8.8" cy="6.4" r="2.4" fill="#585858"/></svg>
<div style="left:897.5px;top:685.2px;width:5.0px;height:1.0px;background:#585858"></div>
<div style="left:908px;top:685.3px;width:75px;height:0.8000000000000682px;background:#777"></div>
<div style="left:946.4px;top:681.6px;width:3.2000000000000455px;height:8.399999999999977px;background:#585858"></div>
<div style="left:987.5px;top:685.2px;width:5.0px;height:1.0px;background:#585858"></div>
<div style="left:989.5px;top:683.2px;width:1.0px;height:5.0px;background:#585858"></div>
<div class="t" style="left:1003.0px;top:681.41px;font-size:7.2px;line-height:9px;color:#585858;letter-spacing:0.402px;">130%</div>
</div>
<div style="left:54px;top:563px;width:1296px;height:234px;background:linear-gradient(to bottom,rgba(0,0,0,0) 0%,rgba(0,0,0,0.2) 18.4%,rgba(0,0,0,0.375) 32.9%,rgba(0,0,0,0.535) 47%,rgba(0,0,0,0.6) 55.6%,rgba(0,0,0,0.66) 75%,rgba(0,0,0,0.7) 100%)"></div>
<div style="left:74px;top:675.5px;width:972.5px;height:4.5px;background:#fff;border-radius:2.3px"></div>
<div style="left:1054px;top:662px;width:4.5px;height:31px;background:#fff;border-radius:2.3px"></div>
<div style="left:1067px;top:675.5px;width:270.5px;height:4.5px;background:#8c8c8c;border-radius:2.3px"></div>
<div style="left:74px;top:713px;width:155px;height:69.5px;background:#191919;border-radius:22px"></div>
<div style="left:239px;top:713px;width:283px;height:69.5px;background:#191919;border-radius:22px"></div>
<div style="left:958px;top:713px;width:380px;height:69.5px;background:#191919;border-radius:22px"></div>
<div style="left:144px;top:738px;width:6px;height:19.5px;background:#fff"></div>
<div style="left:154.8px;top:738px;width:6.0px;height:19.5px;background:#fff"></div>
<svg style="left:270px;top:733px" width="28" height="30" viewBox="0 0 28 30" ><path d="M14 7.9 A9.6 9.6 0 1 1 4.4 17.5" fill="none" stroke="#fff" stroke-width="2.5"/><path d="M9 7.2 L15.6 1.8 V12.4 Z" fill="#fff"/></svg>
<svg style="left:320px;top:733px" width="28" height="30" viewBox="0 0 28 30" ><path d="M14 7.9 A9.6 9.6 0 1 0 23.6 17.5" fill="none" stroke="#fff" stroke-width="2.5"/><path d="M19 7.2 L12.4 1.8 V12.4 Z" fill="#fff"/></svg>
<div class="t" style="left:278.6px;top:745.3px;font-size:20px;line-height:22px;color:#fff;-webkit-text-stroke:1.2px #fff;letter-spacing:-0.4px;transform:scale(0.47);transform-origin:0 0">10</div>
<div class="t" style="left:328.6px;top:745.3px;font-size:20px;line-height:22px;color:#fff;-webkit-text-stroke:1.2px #fff;letter-spacing:-0.4px;transform:scale(0.47);transform-origin:0 0">10</div>
<div class="t" style="left:369.6px;top:735.97px;font-size:17.7px;line-height:22px;color:#fff;letter-spacing:-0.753px;-webkit-text-stroke:0.5px #fff;">51:39</div>
<div class="t" style="left:420.6px;top:735.97px;font-size:17.7px;line-height:22px;color:#fff;letter-spacing:0.078px;-webkit-text-stroke:0.5px #fff;">/</div>
<div class="t" style="left:431.3px;top:735.97px;font-size:17.7px;line-height:22px;color:#fff;letter-spacing:0.183px;-webkit-text-stroke:0.5px #fff;">1:06:04</div>
<svg style="left:996px;top:737px" width="24" height="24" viewBox="0 0 24 24" ><path d="M0.6 7.6 H5.4 L11.6 1.4 V22 L5.4 15.8 H0.6 Z" fill="#fff"/><path d="M14 7 Q17.4 8.6 17.4 11.7 Q17.4 14.8 14 16.4 Z" fill="#fff"/><path d="M14.2 2 Q22.4 4.4 22.4 11.7 Q22.4 19 14.2 21.4" fill="none" stroke="#fff" stroke-width="2.2"/></svg>
<svg style="left:1066px;top:738px" width="24" height="22" viewBox="0 0 24 22" ><rect x="2" y="2" width="20" height="17.4" rx="1.6" fill="none" stroke="#fff" stroke-width="2.3"/><path d="M10.8 8 H6.2 V13.4 H10.8 M18 8 H13.4 V13.4 H18" fill="none" stroke="#fff" stroke-width="1.9"/></svg>
<div class="t" style="left:1140px;top:737.7px;font-size:18px;line-height:22px;color:#fff;-webkit-text-stroke:0.9px #fff;letter-spacing:0px;transform:scale(0.86);transform-origin:0 0">1x</div>
<svg style="left:1205px;top:736px" width="26" height="26" viewBox="0 0 26 26" ><path d="M10.16 4.25 L10.42 0.87 L15.58 0.87 L15.84 4.25 L19.16 6.16 L22.21 4.70 L24.79 9.17 L22.00 11.09 L22.00 14.91 L24.79 16.83 L22.21 21.30 L19.16 19.84 L15.84 21.75 L15.58 25.13 L10.42 25.13 L10.16 21.75 L6.84 19.84 L3.79 21.30 L1.21 16.83 L4.00 14.91 L4.00 11.09 L1.21 9.17 L3.79 4.70 L6.84 6.16 Z" fill="none" stroke="#fff" stroke-width="2.3" stroke-linejoin="round"/><circle cx="13" cy="13" r="3.6" fill="#fff"/></svg>
<svg style="left:1276px;top:737px" width="24" height="24" viewBox="0 0 24 24" ><path d="M1.8 7.8 V1.8 H7.8 M16.2 1.8 H22.2 V7.8 M22.2 16.2 V22.2 H16.2 M7.8 22.2 H1.8 V16.2" fill="none" stroke="#fff" stroke-width="2.5"/></svg>
</div>
</body>
</html>
